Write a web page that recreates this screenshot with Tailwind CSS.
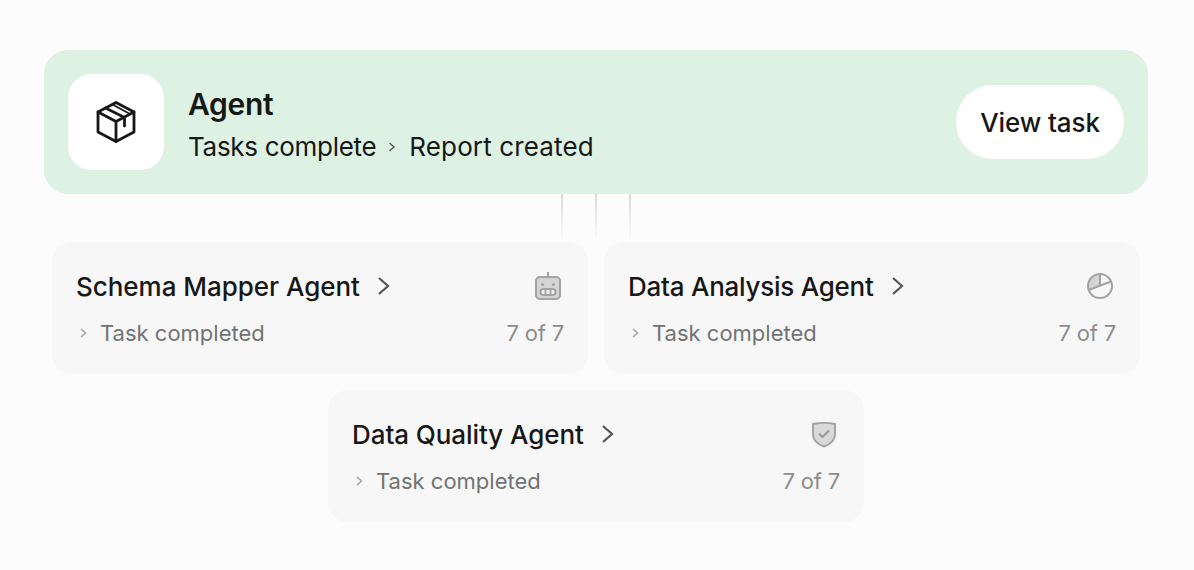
<!DOCTYPE html>
<html lang="en">

<head>
  <meta charset="UTF-8" />
  <meta name="viewport" content="width=device-width, initial-scale=1.0" />
  <title>Agent</title>
  <script src="https://cdn.jsdelivr.net/npm/@tailwindcss/browser@4"></script>
</head>

<body class="bg-[#fcfcfc] h-[570px] overflow-hidden font-['Inter',sans-serif] text-[#171717]">
  <div class="pt-[50px] px-[44px] w-[1192px]">

    <!-- main agent card -->
    <div class="h-[144px] bg-[#def2e3] rounded-[24px] pl-[24px] pr-[24px] flex items-center">
      <div class="w-[96px] h-[96px] bg-white rounded-[24px] flex items-center justify-center">
        <svg width="44" height="44" viewBox="0 0 44 44" fill="none" stroke="#171717" stroke-width="2.8" stroke-linejoin="round" stroke-linecap="round">
          <path d="M22 2.5 L40 12 V32 L22 41.5 L4 32 V12 Z" />
          <path d="M4 12 L22 21.5 L40 12" />
          <path d="M22 21.5 V41.5" />
          <path d="M11.5 8 L30.5 17.5 V26" />
          <path d="M18.5 4.5 L36 14" stroke-width="1.6" />
        </svg>
      </div>
      <div class="ml-[24px] flex-1 pt-[4px]">
        <div class="text-[30px] leading-[36px] font-semibold tracking-[-0.3px] mt-[2px]">Agent</div>
        <div class="mt-[7px] flex items-center text-[26px] leading-[36px] tracking-[-0.3px]">
          <span>Tasks complete</span>
          <svg class="ml-[11px] mr-[12px]" width="10" height="12" viewBox="0 0 10 12" fill="none" stroke="#555" stroke-width="1.4"><path d="M2.5 2 L7 6 L2.5 10" /></svg>
          <span class="tracking-[0.13px]">Report created</span>
        </div>
      </div>
      <button class="h-[74px] w-[168px] bg-white rounded-full text-[26px] font-medium tracking-[-0.1px]">View task</button>
    </div>

    <!-- connector lines -->
    <div class="h-[48px] flex justify-center gap-[32px]">
      <div class="w-[2px] h-[46px] bg-gradient-to-b from-[#d9d9d9] to-[#fcfcfc]"></div>
      <div class="w-[2px] h-[46px] bg-gradient-to-b from-[#d9d9d9] to-[#fcfcfc]"></div>
      <div class="w-[2px] h-[46px] bg-gradient-to-b from-[#d9d9d9] to-[#fcfcfc]"></div>
    </div>

    <!-- sub agents -->
    <div class="flex flex-wrap justify-center gap-[16px] px-[8px]">

      <div class="w-[536px] h-[132px] bg-[#f7f7f7] rounded-[20px] px-[24px] pt-[23px]">
        <div class="flex items-center h-[42px]">
          <span class="text-[26px] font-medium tracking-[-0.03px]">Schema Mapper Agent</span>
          <svg class="ml-[16px]" width="16" height="20" viewBox="0 0 16 20" fill="none" stroke="#555" stroke-width="2.2"><path d="M3 2 L12 10 L3 18" /></svg>
          <svg class="ml-auto mr-[1px] mt-[-1px]" width="30" height="30" viewBox="0 0 30 30" fill="#d4d4d4" stroke="#a3a3a3" stroke-width="2">
            <path d="M15 1 V6" fill="none" />
            <rect x="3" y="6" width="24" height="22" rx="4" />
            <circle cx="9.5" cy="13.5" r="1.6" fill="#a3a3a3" stroke="none" />
            <circle cx="20.5" cy="13.5" r="1.6" fill="#a3a3a3" stroke="none" />
            <rect x="7.5" y="18" width="15" height="6" rx="3" fill="#f7f7f7" />
            <path d="M12.5 18 V24 M17.5 18 V24" fill="none" />
          </svg>
        </div>
        <div class="flex items-center mt-[8px] text-[#737373] text-[22px] leading-[36px]">
          <svg width="24" height="12" viewBox="0 0 24 12" fill="none" stroke="#a3a3a3" stroke-width="1.4"><path d="M5 2 L9.5 6 L5 10" /></svg>
          <span>Task completed</span>
          <span class="ml-auto text-[#8c8c8c] tracking-[-0.2px]">7 of 7</span>
        </div>
      </div>

      <div class="w-[536px] h-[132px] bg-[#f7f7f7] rounded-[20px] px-[24px] pt-[23px]">
        <div class="flex items-center h-[42px]">
          <span class="text-[26px] font-medium tracking-[-0.25px]">Data Analysis Agent</span>
          <svg class="ml-[16px]" width="16" height="20" viewBox="0 0 16 20" fill="none" stroke="#555" stroke-width="2.2"><path d="M3 2 L12 10 L3 18" /></svg>
          <svg class="ml-auto mr-[1px] mt-[-1px]" width="30" height="30" viewBox="0 0 30 30" fill="none" stroke="#a3a3a3" stroke-width="2">
            <path d="M15 15 L3.5 19 A12 12 0 0 1 15 3 Z" fill="#d4d4d4" stroke="none" />
            <circle cx="15" cy="15" r="12" />
            <path d="M15 3 V15 M3.5 19 L26 10.5" />
          </svg>
        </div>
        <div class="flex items-center mt-[8px] text-[#737373] text-[22px] leading-[36px]">
          <svg width="24" height="12" viewBox="0 0 24 12" fill="none" stroke="#a3a3a3" stroke-width="1.4"><path d="M5 2 L9.5 6 L5 10" /></svg>
          <span>Task completed</span>
          <span class="ml-auto text-[#8c8c8c] tracking-[-0.2px]">7 of 7</span>
        </div>
      </div>

      <div class="w-[536px] h-[132px] bg-[#f7f7f7] rounded-[20px] px-[24px] pt-[23px]">
        <div class="flex items-center h-[42px]">
          <span class="text-[26px] font-medium tracking-[-0.07px]">Data Quality Agent</span>
          <svg class="ml-[16px]" width="16" height="20" viewBox="0 0 16 20" fill="none" stroke="#555" stroke-width="2.2"><path d="M3 2 L12 10 L3 18" /></svg>
          <svg class="ml-auto mr-[1px] mt-[-1px]" width="30" height="30" viewBox="0 0 30 30" fill="#d9d9d9" stroke="#a3a3a3" stroke-width="2">
            <path d="M4 5 C10 3.5 20 3.5 26 5 V15 C26 21 21 25.5 15 27.5 C9 25.5 4 21 4 15 Z" stroke-linejoin="round" />
            <path d="M10 14.5 L13.5 18 L20 11.5" fill="none" stroke="#999999" />
          </svg>
        </div>
        <div class="flex items-center mt-[8px] text-[#737373] text-[22px] leading-[36px]">
          <svg width="24" height="12" viewBox="0 0 24 12" fill="none" stroke="#a3a3a3" stroke-width="1.4"><path d="M5 2 L9.5 6 L5 10" /></svg>
          <span>Task completed</span>
          <span class="ml-auto text-[#8c8c8c] tracking-[-0.2px]">7 of 7</span>
        </div>
      </div>

    </div>
  </div>
</body>

</html>
